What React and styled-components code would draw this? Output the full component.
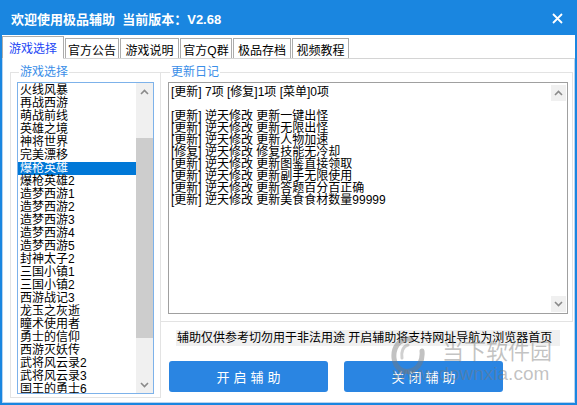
import React from 'react';
import styled, { createGlobalStyle } from 'styled-components';

const Global = createGlobalStyle`
  html, body { margin: 0; padding: 0; background: #fff; }
  body { font-family: "Liberation Sans", "Noto Sans CJK SC", sans-serif; }
  * { box-sizing: border-box; }
`;

const CJK = `"Liberation Sans", "Noto Sans CJK SC", sans-serif`;

const Window = styled.div`
  position: relative;
  width: 577px;
  height: 405px;
  background: #1a86e0;
  padding: 0 2px 2px 2px;
  display: flex;
  flex-direction: column;
  overflow: hidden;
  font-family: ${CJK};
`;

const TitleBar = styled.div`
  height: 35px;
  flex: none;
  display: flex;
  align-items: center;
  justify-content: space-between;
  padding: 2px 12px 0 9px;
  color: #fff;
  font-weight: bold;
  font-size: 13px;
`;

const Title = styled.div`
  white-space: pre;
`;

const Close = styled.svg`
  width: 11px;
  height: 11px;
  display: block;
`;

const Body = styled.div`
  flex: 1;
  background: #fff;
  display: flex;
  flex-direction: column;
`;

const TabStrip = styled.div`
  height: 23px;
  flex: none;
  display: flex;
  align-items: flex-end;
  gap: 1px;
  position: relative;
  z-index: 1;
`;

const Tab = styled.div`
  width: ${p => p.$w}px;
  height: ${p => (p.$active ? 23 : 20)}px;
  margin-bottom: ${p => (p.$active ? -1 : 0)}px;
  border: 1px solid #acacac;
  border-bottom: ${p => (p.$active ? '1px solid #fff' : 'none')};
  background: #fff;
  color: ${p => (p.$active ? '#1c46f5' : '#000')};
  font-size: 12px;
  display: flex;
  align-items: center;
  justify-content: center;
  padding-top: ${p => (p.$active ? 0 : 1)}px;
`;

const Panel = styled.div`
  flex: 1;
  border: 1px solid #b9d3ee;
  border-top-color: #d4d4d4;
  display: flex;
  padding: 13px 0 0 7px;
`;

const Group = styled.div`
  position: relative;
  width: ${p => p.$w}px;
  height: ${p => p.$h}px;
  border: 1px solid #e3e3e3;
  ${p => (p.$noLeft ? 'border-left: none;' : '')}
  padding: 9px 0 0 ${p => p.$pl}px;
  display: flex;
  flex-direction: column;
`;

const GroupLabel = styled.div`
  position: absolute;
  top: -7px;
  left: ${p => p.$x}px;
  padding: 0 1px;
  background: #fff;
  color: #3a8ee8;
  font-size: 12px;
  line-height: 13px;
`;

const ListBox = styled.div`
  width: 137px;
  height: 312px;
  border: 1px solid #7db2ea;
  display: flex;
  overflow: hidden;
`;

const Items = styled.div`
  flex: 1;
  padding-top: 1px;
  overflow: hidden;
`;

const Item = styled.div`
  height: 13px;
  line-height: 13px;
  font-size: 12px;
  padding-left: 2px;
  white-space: nowrap;
  color: ${p => (p.$sel ? '#fff' : '#000')};
  background: ${p => (p.$sel ? '#0078d7' : 'transparent')};
`;

const ScrollBar = styled.div`
  width: 17px;
  flex: none;
  display: flex;
  flex-direction: column;
  background: ${p => p.$track};
  padding: ${p => p.$pad};
`;

const ArrowBtn = styled.div`
  height: ${p => p.$h}px;
  flex: none;
  display: flex;
  align-items: center;
  justify-content: center;
  background: #f0f0f0;
`;

const Thumb = styled.div`
  height: ${p => p.$h}px;
  margin-top: ${p => p.$top}px;
  background: #cdcdcd;
  flex: none;
`;

const Spacer = styled.div`
  flex: 1;
`;

const RightCol = styled.div`
  display: flex;
  flex-direction: column;
`;

const TextBox = styled.div`
  width: 400px;
  height: 232px;
  border: 1px solid #a0a0a0;
  display: flex;
`;

const LogText = styled.div`
  flex: 1;
  padding: 3px 2px;
  font-size: 12px;
  line-height: 12px;
  white-space: pre;
  color: #000;
`;

const Notice = styled.div`
  margin: 8px 0 0 15px;
  width: 384px;
  height: 16px;
  background: #f0f0f0;
  font-size: 12px;
  line-height: 16px;
  padding-left: 1px;
  white-space: pre;
  color: #000;
`;

const Buttons = styled.div`
  display: flex;
  gap: 16px;
  margin: 15px 0 0 8px;
`;

const Button = styled.div`
  width: 159px;
  height: 31px;
  border-radius: 3px;
  background: #2a85e2;
  color: #fff;
  font-size: 13px;
  letter-spacing: 4px;
  display: flex;
  align-items: center;
  justify-content: center;
  padding-left: 4px;
`;

const Watermark = styled.div`
  position: absolute;
  left: 391px;
  top: 336px;
  pointer-events: none;
  display: grid;
  grid-template-columns: 34px auto;
  column-gap: 17px;
  color: rgba(120, 120, 120, 0.45);
`;

const WmLogo = styled.svg`
  grid-row: 1 / span 2;
  width: 34px;
  height: 38px;
`;

const WmName = styled.div`
  font-family: "Noto Sans CJK SC", sans-serif;
  font-size: 22px;
  line-height: 26px;
  letter-spacing: 0px;
`;

const WmUrl = styled.div`
  grid-column: 1 / span 2;
  margin-top: -6px;
  font-family: "Liberation Sans", sans-serif;
  font-size: 19px;
  line-height: 20px;
  padding-left: 2px;
  position: relative;
  top: -4px;
`;

const Chevron = ({ down }) => (
  <svg width="9" height="6" viewBox="0 0 9 6">
    <path
      d={down ? 'M1 1 L4.5 4.5 L8 1' : 'M1 5 L4.5 1.5 L8 5'}
      fill="none"
      stroke="#8a8a8a"
      strokeWidth="1.6"
    />
  </svg>
);

const tabs = [
  ['游戏选择', 62],
  ['官方公告', 54],
  ['游戏说明', 59],
  ['官方Q群', 52],
  ['极品存档', 58],
  ['视频教程', 57],
];

const games = [
  '火线风暴', '再战西游', '萌战前线', '英雄之境', '神将世界', '完美漂移', '爆枪英雄',
  '爆枪英雄2', '造梦西游1', '造梦西游2', '造梦西游3', '造梦西游4', '造梦西游5',
  '封神太子2', '三国小镇1', '三国小镇2', '西游战记3', '龙玉之灰逝', '瞳术使用者',
  '勇士的信仰', '西游灭妖传', '武将风云录2', '武将风云录3', '国王的勇士6',
];

const log = [
  '[更新] 7项 [修复]1项 [菜单]0项',
  '',
  '[更新] 逆天修改 更新一键出怪',
  '[更新] 逆天修改 更新无限出怪',
  '[更新] 逆天修改 更新人物加速',
  '[修复] 逆天修改 修复技能无冷却',
  '[更新] 逆天修改 更新图鉴直接领取',
  '[更新] 逆天修改 更新副手无限使用',
  '[更新] 逆天修改 更新答题百分百正确',
  '[更新] 逆天修改 更新美食食材数量99999',
].join('\n');

export default function App() {
  return (
    <>
      <Global />
      <Window>
        <TitleBar>
          <Title>欢迎使用极品辅助  当前版本：V2.68</Title>
          <Close viewBox="0 0 11 11">
            <path d="M1 1 L10 10 M10 1 L1 10" stroke="#fff" strokeWidth="1.8" />
          </Close>
        </TitleBar>
        <Body>
          <TabStrip>
            {tabs.map(([t, w], i) => (
              <Tab key={t} $w={w} $active={i === 0}>{t}</Tab>
            ))}
          </TabStrip>
          <Panel>
            <Group $w={151} $h={326} $pl={6}>
              <GroupLabel $x={8}>游戏选择</GroupLabel>
              <ListBox>
                <Items>
                  {games.map((g, i) => (
                    <Item key={g} $sel={i === 6}>{g}</Item>
                  ))}
                </Items>
                <ScrollBar $track="#f0f0f0" $pad="0">
                  <ArrowBtn $h={17}><Chevron /></ArrowBtn>
                  <Thumb $top={38} $h={200} />
                  <Spacer />
                  <ArrowBtn $h={17}><Chevron down /></ArrowBtn>
                </ScrollBar>
              </ListBox>
            </Group>
            <RightCol>
              <Group $w={412} $h={250} $pl={7} $noLeft>
                <GroupLabel $x={9}>更新日记</GroupLabel>
                <TextBox>
                  <LogText>{log}</LogText>
                  <ScrollBar $track="#fff" $pad="2px 1px 1px 1px">
                    <ArrowBtn $h={16}><Chevron /></ArrowBtn>
                    <Spacer />
                    <ArrowBtn $h={16}><Chevron down /></ArrowBtn>
                  </ScrollBar>
                </TextBox>
              </Group>
              <Notice>辅助仅供参考切勿用于非法用途 开启辅助将支持网址导航为浏览器首页</Notice>
              <Buttons>
                <Button>开启辅助</Button>
                <Button>关闭辅助</Button>
              </Buttons>
            </RightCol>
          </Panel>
        </Body>
        <Watermark>
          <WmLogo viewBox="0 0 34 38">
            <path
              d="M20 3 C8 2 2 12 3 22 C4 32 12 37 19 35 C28 33 32 24 31 15"
              fill="none"
              stroke="rgba(120,120,120,0.45)"
              strokeWidth="5"
              strokeLinecap="round"
            />
            <path
              d="M17 9 C12 10 10 16 11 22"
              fill="none"
              stroke="rgba(120,120,120,0.35)"
              strokeWidth="3"
              strokeLinecap="round"
            />
          </WmLogo>
          <WmName>当下软件园</WmName>
          <WmUrl>www.downxia.com</WmUrl>
        </Watermark>
      </Window>
    </>
  );
}
